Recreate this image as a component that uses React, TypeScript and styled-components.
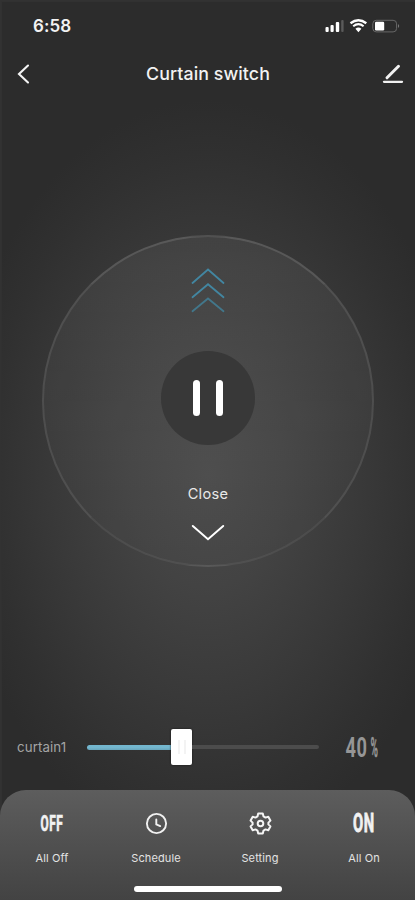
import React from "react";
import styled, { createGlobalStyle } from "styled-components";

const GlobalStyle = createGlobalStyle`
  * { box-sizing: border-box; }
  body { margin: 0; background: #2c2c2c; }
  button { padding: 0; border: 0; background: none; color: inherit; font: inherit; }
  svg { display: block; }
`;

const Screen = styled.main`
  width: 415px;
  height: 900px;
  overflow: hidden;
  display: flex;
  flex-direction: column;
  color: #f2f2f2;
  font-family: Inter, Roboto, sans-serif;
  background: radial-gradient(ellipse 255px 375px at 208px 475px, #4a4a4a 0%, #434343 30%, #393939 60%, #303030 86%, #2c2c2c 100%);
  box-shadow: inset 2px 2px 1px #323232;
`;

const StatusBar = styled.div`
  height: 50px;
  padding: 2px 15px 0 33px;
  display: flex;
  align-items: center;
  justify-content: space-between;
`;

const Time = styled.span`
  font-size: 17px;
  font-weight: 600;
  line-height: 20px;
  letter-spacing: 0.1px;
`;

const Header = styled.header`
  height: 48px;
  padding: 0 11px 0 16px;
  display: grid;
  grid-template-columns: 22px 1fr 22px;
  align-items: center;
`;

const Title = styled.h1`
  margin: 0;
  text-align: center;
  font-size: 17.8px;
  line-height: 24px;
  font-weight: 500;
  letter-spacing: 0.08px;
  transform: translateX(-2px);
`;

const Dial = styled.section`
  width: 332px;
  height: 332px;
  flex: none;
  margin: 137px 0 0 42px;
  padding-top: 31px;
  border: 2px solid;
  border-color: rgba(255, 255, 255, 0.12) rgba(255, 255, 255, 0.09) rgba(255, 255, 255, 0.06);
  border-radius: 50%;
  display: flex;
  flex-direction: column;
  align-items: center;
  background: linear-gradient(rgba(255, 255, 255, 0.055), rgba(255, 255, 255, 0.012));
`;

const PauseButton = styled.button`
  width: 94px;
  height: 94px;
  flex: none;
  margin-top: 37px;
  border-radius: 50%;
  background: #383838;
  display: flex;
  justify-content: center;
  align-items: center;
  gap: 16px;
`;

const PauseBar = styled.span`
  width: 7px;
  height: 36px;
  border-radius: 4px;
  background: #fff;
`;

const CloseLabel = styled.span`
  margin-top: 38px;
  margin-bottom: 19px;
  height: 22px;
  line-height: 22px;
  font-size: 14.6px;
  letter-spacing: 0.3px;
  color: #e8e8e8;
`;

const SliderRow = styled.section`
  height: 46px;
  margin-top: 157px;
  padding-left: 17px;
  display: flex;
  align-items: center;
`;

const CurtainName = styled.span`
  width: 70px;
  font-size: 13.3px;
  line-height: 18px;
  letter-spacing: 0.1px;
  color: #a4a4a4;
`;

const Track = styled.div`
  width: 232px;
  height: 36px;
  display: flex;
  align-items: center;
`;

const Fill = styled.span`
  height: 5px;
  border-radius: 3px 0 0 3px;
  background: linear-gradient(#73b6ce 0 50%, #68a5bb);
`;

const Thumb = styled.span`
  width: 21px;
  height: 36px;
  border-radius: 2px;
  background: #fff;
  box-shadow: 0 0 2px #111;
  display: flex;
  align-items: center;
  justify-content: center;
  gap: 4px;
`;

const Grip = styled.span`
  width: 2px;
  height: 14px;
  background: #f3f3f3;
`;

const Rest = styled.span`
  flex: 1;
  height: 4px;
  border-radius: 0 2px 2px 0;
  background: #4c4c4c;
`;

const Value = styled.span`
  width: 35px;
  margin-left: 26px;
  padding-top: 2px;
  display: flex;
  align-items: center;
  color: #969696;
`;

const Narrow = styled.span<{ $size: number; $scale: number; $width: number; $stroke?: number }>`
  display: flex;
  justify-content: center;
  width: ${({ $width }) => $width}px;
  font-family: Roboto, sans-serif;
  font-size: ${({ $size }) => $size}px;
  font-weight: 700;
  line-height: 24px;
  white-space: nowrap;
  letter-spacing: 1px;
  -webkit-text-stroke: ${({ $stroke }) => $stroke ?? 0}px currentColor;
  transform: scaleX(${({ $scale }) => $scale});
`;

const Panel = styled.nav`
  flex: 1;
  margin-top: 20px;
  border-radius: 26px 26px 0 0;
  background: linear-gradient(#5d5d5d, #515151 45%, #434343);
  display: flex;
  flex-direction: column;
  align-items: center;
`;

const Actions = styled.div`
  width: 100%;
  height: 96px;
  padding-top: 21px;
  display: grid;
  grid-template-columns: repeat(4, 104px);
`;

const Action = styled.button`
  display: flex;
  flex-direction: column;
  align-items: center;
`;

const ActionIcon = styled.span`
  height: 25px;
  display: flex;
  align-items: center;
  justify-content: center;
`;

const ActionLabel = styled.span`
  margin-top: 14px;
  font-size: 11px;
  line-height: 16px;
  letter-spacing: 0.12px;
  color: #e3e3e3;
`;

const HomeIndicator = styled.div`
  width: 148px;
  height: 6px;
  border-radius: 3px;
  background: #fff;
`;

const StatusIcons = () => (
  <svg width="76" height="18" viewBox="0 0 76 18" fill="none">
    <g fill="#fff">
      <rect x="1.5" y="10" width="3.2" height="5" rx="1" />
      <rect x="6.5" y="8" width="3.2" height="7" rx="1" />
      <rect x="11.8" y="5" width="3.4" height="10" rx="1" />
      <rect x="17.2" y="3" width="2.4" height="12" rx="1" opacity=".22" />
    </g>
    <path d="M26.5 6.2Q34.4.2 42.3 6.2" stroke="#fff" strokeWidth="2.4" />
    <path d="M29.2 9.3q5.2-4.2 10.4 0" stroke="#fff" strokeWidth="2.1" />
    <path d="m31.4 11.7 3 3.5 3-3.5q-3-2.2-6 0Z" fill="#fff" />
    <rect x="48.8" y="3.3" width="23.8" height="11.6" rx="3.5" stroke="#686868" />
    <path d="M74 7v4q2.4-2 0-4Z" fill="#777" />
    <rect x="51" y="4.8" width="9.2" height="8.6" rx="1.2" fill="#fff" />
  </svg>
);

const Back = () => (
  <svg width="15" height="22" viewBox="0 0 15 22" fill="none" stroke="#f5f5f5" strokeWidth="2.1" strokeLinecap="round">
    <path d="M12 2.5 3 11l9 8.5" />
  </svg>
);

const Edit = () => (
  <svg width="22" height="22" viewBox="0 0 22 22" fill="none" stroke="#f1f1f1" strokeLinecap="round">
    <path d="M5 14.8 16.5 3.3" strokeWidth="3" />
    <path d="M2 18.8h18" strokeWidth="2.3" />
  </svg>
);

const OpenArrows = () => (
  <svg width="34" height="46" viewBox="0 0 34 46" fill="none" strokeWidth="1.8" strokeLinecap="round">
    <path d="M1.5 15 17 1.5 32.5 15" stroke="#4286a1" />
    <path d="M1.5 29.2 17 16.2l15.5 13" stroke="#4286a1" />
    <path d="M1.5 43.2 17 30.5l15.5 12.7" stroke="#42778b" />
  </svg>
);

const CloseArrow = () => (
  <svg width="34" height="18" viewBox="0 0 34 18" fill="none" stroke="#fff" strokeWidth="2" strokeLinecap="round">
    <path d="m1.8 2 15.2 13.2L32.2 2" />
  </svg>
);

const Clock = () => (
  <svg width="24" height="24" viewBox="0 0 24 24" fill="none" stroke="#f1f1f1" strokeWidth="1.9">
    <circle cx="12.5" cy="11.5" r="9.6" />
    <path d="M12.3 7.5v4.8l3.9 1.8" strokeLinecap="round" />
  </svg>
);

const Gear = () => (
  <svg width="24" height="24" viewBox="0 0 24 24" fill="none" stroke="#f5f5f5" strokeWidth="2" strokeLinejoin="round">
    <path transform="translate(0 -.5)" d="M10.2 2h4.6l.7 2.9 2 1.2 2.8-.8 2.1 3.8-2 2v1.8l2 2-2.1 3.8-2.8-.8-2 1.2-.7 2.9h-4.6l-.7-2.9-2-1.2-2.8.8-2.1-3.8 2-2v-1.8l-2-2 2.1-3.8 2.8.8 2-1.2Z" />
    <circle cx="12.5" cy="11.5" r="2.8" />
  </svg>
);

const actions = [
  { label: "All Off", icon: <Narrow $size={21.5} $scale={0.55} $width={40} $stroke={0.7}>OFF</Narrow> },
  { label: "Schedule", icon: <Clock /> },
  { label: "Setting", icon: <Gear /> },
  { label: "All On", icon: <Narrow $size={25} $scale={0.59} $width={40} $stroke={0.8}>ON</Narrow> },
];

const position = 84;

export default function App() {
  return (
    <>
      <GlobalStyle />
      <Screen>
        <StatusBar>
          <Time>6:58</Time>
          <StatusIcons />
        </StatusBar>
        <Header>
          <Back />
          <Title>Curtain switch</Title>
          <Edit />
        </Header>
        <Dial>
          <OpenArrows />
          <PauseButton aria-label="Pause">
            <PauseBar />
            <PauseBar />
          </PauseButton>
          <CloseLabel>Close</CloseLabel>
          <CloseArrow />
        </Dial>
        <SliderRow>
          <CurtainName>curtain1</CurtainName>
          <Track>
            <Fill style={{ width: position }} />
            <Thumb>
              <Grip />
              <Grip />
            </Thumb>
            <Rest />
          </Track>
          <Value>
            <Narrow $size={28} $scale={0.65} $width={23}>40</Narrow>
            <Narrow $size={28} $scale={0.36} $width={13} $stroke={0.4}>%</Narrow>
          </Value>
        </SliderRow>
        <Panel>
          <Actions>
            {actions.map(({ label, icon }) => (
              <Action key={label}>
                <ActionIcon>{icon}</ActionIcon>
                <ActionLabel>{label}</ActionLabel>
              </Action>
            ))}
          </Actions>
          <HomeIndicator />
        </Panel>
      </Screen>
    </>
  );
}
